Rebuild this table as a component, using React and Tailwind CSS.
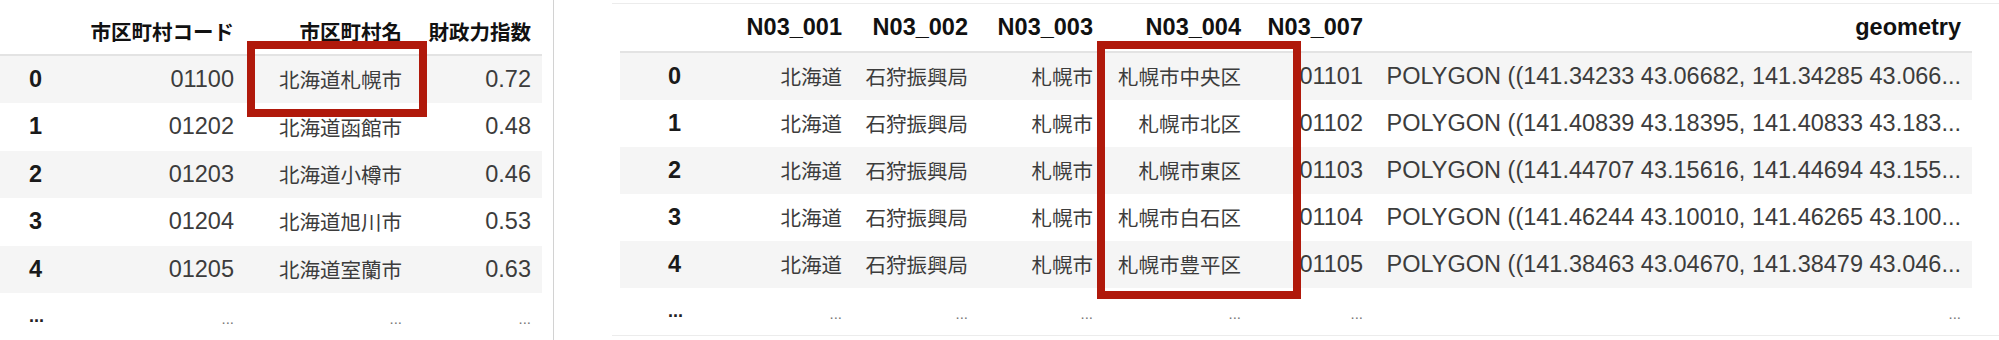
import React from 'react';

const leftCols = ['市区町村コード', '市区町村名', '財政力指数'];
const leftRows = [
  ['0', '01100', '北海道札幌市', '0.72'],
  ['1', '01202', '北海道函館市', '0.48'],
  ['2', '01203', '北海道小樽市', '0.46'],
  ['3', '01204', '北海道旭川市', '0.53'],
  ['4', '01205', '北海道室蘭市', '0.63'],
];

const rightCols = ['N03_001', 'N03_002', 'N03_003', 'N03_004', 'N03_007', 'geometry'];
const rightRows = [
  ['0', '北海道', '石狩振興局', '札幌市', '札幌市中央区', '01101', 'POLYGON ((141.34233 43.06682, 141.34285 43.066...'],
  ['1', '北海道', '石狩振興局', '札幌市', '札幌市北区', '01102', 'POLYGON ((141.40839 43.18395, 141.40833 43.183...'],
  ['2', '北海道', '石狩振興局', '札幌市', '札幌市東区', '01103', 'POLYGON ((141.44707 43.15616, 141.44694 43.155...'],
  ['3', '北海道', '石狩振興局', '札幌市', '札幌市白石区', '01104', 'POLYGON ((141.46244 43.10010, 141.46265 43.100...'],
  ['4', '北海道', '石狩振興局', '札幌市', '札幌市豊平区', '01105', 'POLYGON ((141.38463 43.04670, 141.38479 43.046...'],
];

const isCJK = (s) => /[\u3040-\u9fff]/.test(s);

// one table cell; CJK text is set a bit smaller than latin to match the reference
const Cell = ({ v, head }) => {
  const font = isCJK(v)
    ? "font-[family-name:'Noto_Sans_CJK_JP',sans-serif] text-[20.5px]"
    : "font-[family-name:'Liberation_Sans','Noto_Sans_CJK_JP',sans-serif] text-[23.5px]";
  return (
    <div
      className={`flex items-center justify-end pr-[11px] whitespace-nowrap ${font} ${
        head ? 'font-bold text-[#111]' : 'text-[#3c3c3c]'
      }`}
    >
      {v}
    </div>
  );
};

const Dots = ({ index, pad }) =>
  index ? (
    <div className={`flex items-center ${pad} font-[family-name:'Liberation_Sans',sans-serif] text-[18px] font-bold text-[#222]`}>
      ...
    </div>
  ) : (
    <div className="flex items-center justify-end pr-[11px] pt-[6px] font-[family-name:'Liberation_Sans',sans-serif] text-[15px] text-[#777]">
      ...
    </div>
  );

const Index = ({ v, pad }) => (
  <div className={`flex items-center ${pad} font-[family-name:'Liberation_Sans',sans-serif] text-[23.5px] font-bold text-[#1a1a1a]`}>
    {v}
  </div>
);

const LeftTable = () => (
  <div className="w-[542px] pt-[8px]">
    <div className="grid grid-cols-[80px_165px_168px_129px] h-[48px] border-b-2 border-[#e3e3e3]">
      <div />
      {leftCols.map((c) => (
        <Cell key={c} v={c} head />
      ))}
    </div>
    {leftRows.map((r, i) => (
      <div
        key={r[0]}
        className={`grid grid-cols-[80px_165px_168px_129px] h-[47.4px] ${i % 2 === 0 ? 'bg-[#f5f5f5]' : 'bg-white'}`}
      >
        <Index v={r[0]} pad="pl-[29px]" />
        {r.slice(1).map((v, j) => (
          <Cell key={j} v={v} />
        ))}
      </div>
    ))}
    <div className="grid grid-cols-[80px_165px_168px_129px] h-[47.4px]">
      <Dots index pad="pl-[29px]" />
      <Dots />
      <Dots />
      <Dots />
    </div>
  </div>
);

const RightTable = () => (
  <div className="w-[1352px] ml-[8px]">
    <div className="grid grid-cols-[120px_113px_126px_125px_148px_122px_598px] h-[49px] border-b-2 border-[#e3e3e3]">
      <div />
      {rightCols.map((c) => (
        <Cell key={c} v={c} head />
      ))}
    </div>
    {rightRows.map((r, i) => (
      <div
        key={r[0]}
        className={`grid grid-cols-[120px_113px_126px_125px_148px_122px_598px] h-[47px] ${
          i % 2 === 0 ? 'bg-[#f5f5f5]' : 'bg-white'
        }`}
      >
        <Index v={r[0]} pad="pl-[48px]" />
        {r.slice(1).map((v, j) => (
          <Cell key={j} v={v} />
        ))}
      </div>
    ))}
    <div className="grid grid-cols-[120px_113px_126px_125px_148px_122px_598px] h-[47px]">
      <Dots index pad="pl-[48px]" />
      <Dots />
      <Dots />
      <Dots />
      <Dots />
      <Dots />
      <Dots />
    </div>
  </div>
);

export default function App() {
  return (
    <div className="relative flex w-[1999px] h-[340px] overflow-hidden bg-white">
      <div className="w-[554px] h-full shrink-0 border-r border-[#d2d2d2]">
        <LeftTable />
      </div>
      <div className="flex-1 ml-[58px] mt-[3px] h-[333px] border-y border-[#ececec]">
        <RightTable />
      </div>

      {/* highlight boxes */}
      <div className="absolute left-[247px] top-[41px] w-[180px] h-[76px] border-[8px] border-[#b0190b]" />
      <div className="absolute left-[1097px] top-[41px] w-[204px] h-[258px] border-[8px] border-[#b0190b]" />
    </div>
  );
}
